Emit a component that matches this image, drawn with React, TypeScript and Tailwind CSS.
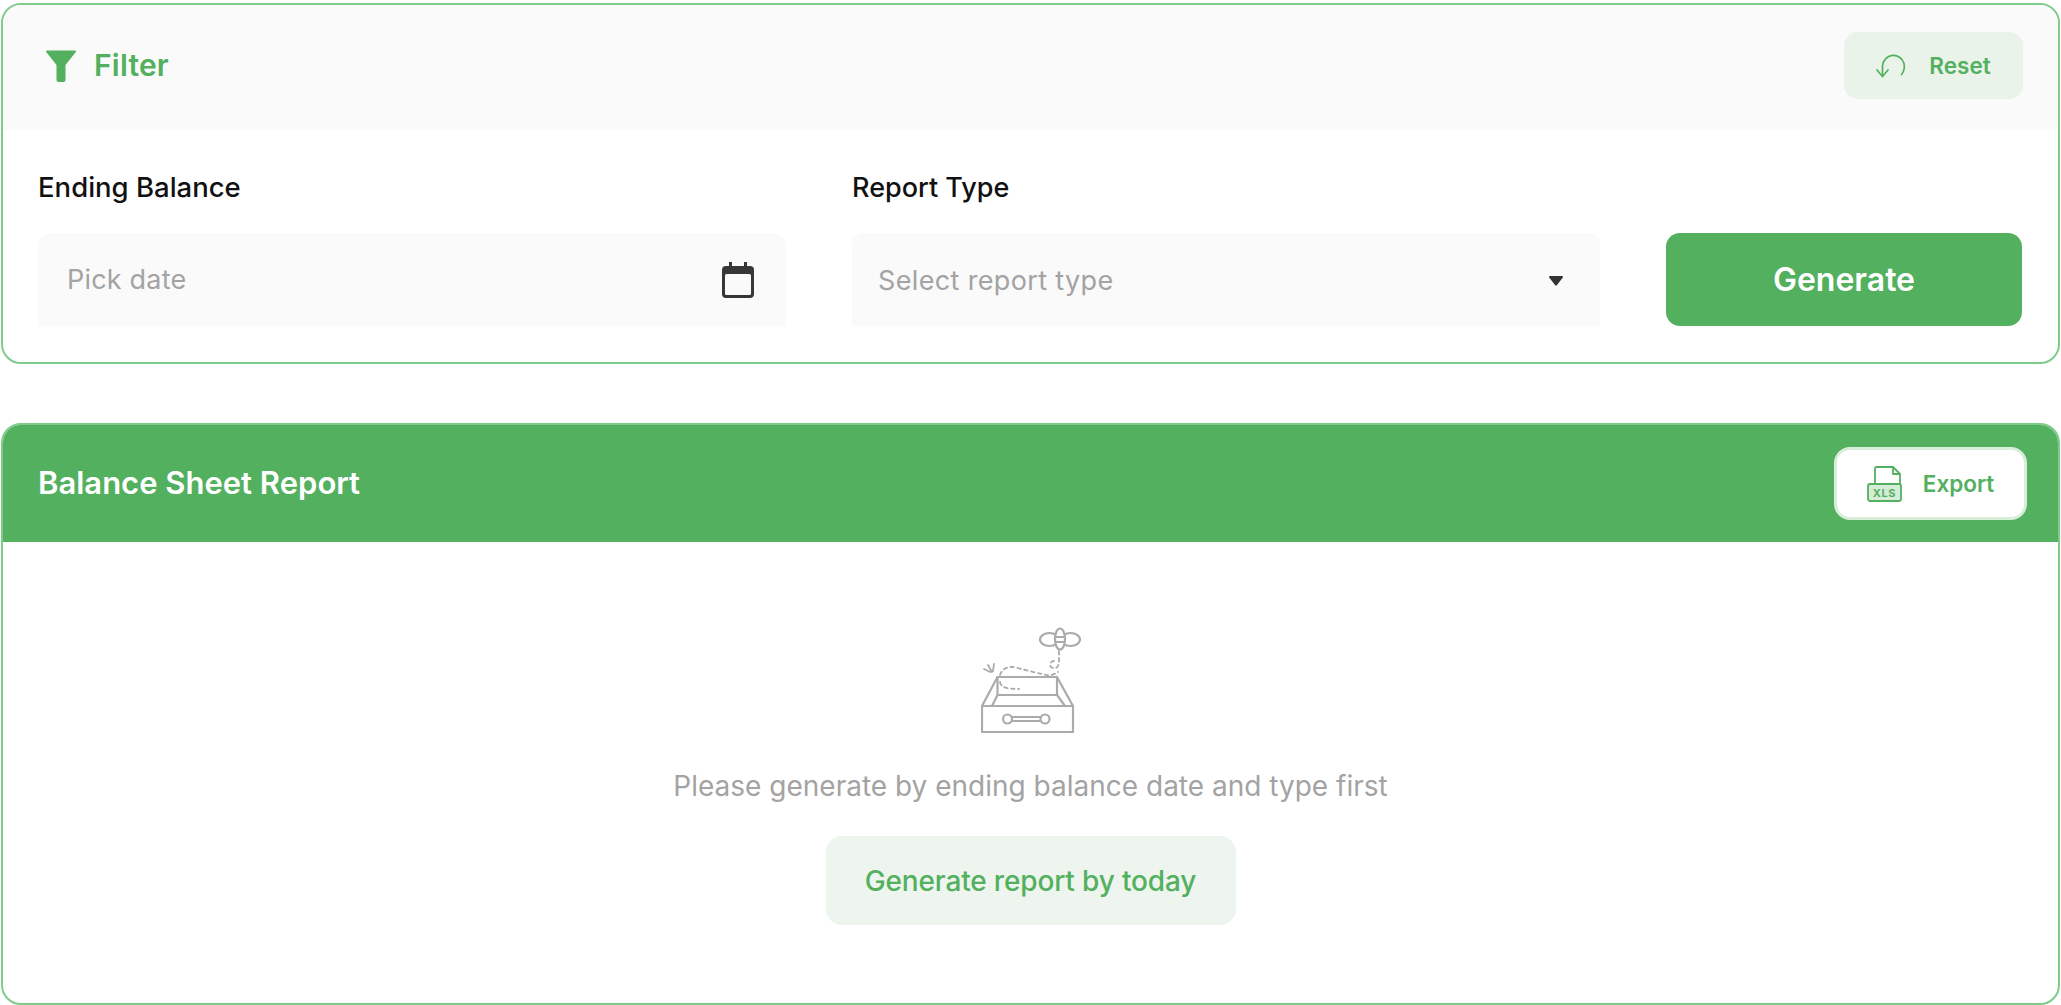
function FilterIcon() {
  return (
    <svg width="30" height="32" viewBox="0 0 30 32" className="shrink-0">
      <path d="M1 0.500h28a1 1 0 0 1 .8 1.600L19.500 15v15a2 2 0 0 1-2 2h-5a2 2 0 0 1-2-2V15L.2 2.100A1 1 0 0 1 1 .5z" fill="#53b05f" />
    </svg>
  )
}

function ResetIcon() {
  return (
    <svg width="32" height="26" viewBox="0 0 32 26" fill="none" stroke="#53b05f" strokeWidth="1.700" strokeLinecap="round" strokeLinejoin="round" className="shrink-0">
      <path d="M6.500 23V13A11 11.500 0 0 1 28 10.500c1 4-.2 8-2.500 11" />
      <path d="M1 17l5.500 6.500L12 17" />
    </svg>
  )
}

function CalendarIcon() {
  return (
    <svg width="32" height="36" viewBox="0 0 32 36" className="shrink-0">
      <path d="M7 0h3v4h12V0h3v4h3a4 4 0 0 1 4 4v24a4 4 0 0 1-4 4H4a4 4 0 0 1-4-4V8a4 4 0 0 1 4-4h3z" fill="#373737" />
      <rect x="3" y="12" width="26" height="21" rx="1.500" fill="#fafafa" />
    </svg>
  )
}

function XlsIcon() {
  return (
    <svg width="36" height="36" viewBox="0 0 36 36" fill="none" className="shrink-0">
      <path d="M8 18V2.500A1.500 1.500 0 0 1 9.500 1H26l7 7v10" stroke="#53b05f" strokeWidth="1.800" strokeLinejoin="round" />
      <path d="M26 1v7h7" stroke="#53b05f" strokeWidth="1.800" strokeLinejoin="round" />
      <rect x="1" y="18" width="33" height="17" rx="2" fill="#d5ecd8" stroke="#53b05f" strokeWidth="1.800" />
      <text x="17.500" y="31" textAnchor="middle" fontSize="11" fontWeight="700" fill="#53b05f" fontFamily="Inter, sans-serif" letterSpacing="0.6">XLS</text>
    </svg>
  )
}

function EmptyDrawer() {
  return (
    <svg width="100" height="106" viewBox="0 0 100 106" fill="none" stroke="#ababab" strokeWidth="2.200" strokeLinejoin="round" strokeLinecap="round" className="ml-[1px]">
      <rect x="1" y="79" width="91" height="26" />
      <path d="M1 79L16.500 50H76L92 79" />
      <path d="M16.500 50V68H76V50" />
      <path d="M16.500 68L11 79M76 68L84 79" />
      <circle cx="26.500" cy="92" r="4.500" />
      <circle cx="64" cy="92" r="4.500" />
      <path d="M31 90h28.500M31 94h28.500" />
      {/* flight trail */}
      <path d="M19 48c2-6 8-10 18-7s24 6 28 7c4 1 9-1 12-3" strokeDasharray="3.500 3.500" strokeWidth="1.800" />
      <path d="M19 55c1 6 8 7 19 7" strokeDasharray="3.500 3.500" strokeWidth="1.800" />
      <path d="M78 24v10c0 6-3 8-6 7-5-1-3-7 1-7" strokeDasharray="3.500 3.500" strokeWidth="1.800" />
      <path d="M3 42l6 3M7 38l4 7M13 37l-1 7" strokeWidth="1.800" />
      {/* bee */}
      <ellipse cx="68.500" cy="12.500" rx="9.500" ry="6.500" />
      <ellipse cx="89.500" cy="12.500" rx="9.500" ry="6.500" />
      <ellipse cx="79" cy="12" rx="5" ry="10.500" fill="#fff" />
      <path d="M74.500 10h9M74.500 15h9" />
    </svg>
  )
}

export default function App() {
  return (
    <div className="w-full h-[1005px] bg-white pt-[3px] px-px flex flex-col font-['Inter',sans-serif] overflow-hidden">
      {/* filter card */}
      <section className="h-[361px] shrink-0 rounded-[20px] border-2 border-[#7fcc8a] overflow-hidden">
        <div className="h-[125px] bg-[#fafafa] flex items-center justify-between pl-[43px] pr-[35px] pb-[4px]">
          <div className="flex items-center gap-[18px]">
            <FilterIcon />
            <span className="text-[30px] font-semibold text-[#53b05f] tracking-[0.2px]">Filter</span>
          </div>
          <button className="h-[67px] w-[179px] rounded-[14px] bg-[#e9f3ea] flex items-center justify-center gap-[21px]">
            <ResetIcon />
            <span className="text-[22.500px] font-semibold text-[#53b05f]">Reset</span>
          </button>
        </div>
        <div className="grid grid-cols-[748px_748px_356px] gap-x-[66px] pl-[35px] pt-[39px]">
          <div className="flex flex-col gap-[26px]">
            <label className="h-[38px] flex items-center text-[27.500px] font-medium text-[#111]">Ending Balance</label>
            <div className="h-[93px] rounded-t-[12px] bg-[#fafafa] flex items-center justify-between pl-[29px] pr-[32px] pt-[1px]">
              <span className="text-[27px] text-[#a3a3a3] tracking-[0.2px]">Pick date</span>
              <CalendarIcon />
            </div>
          </div>
          <div className="flex flex-col gap-[26px]">
            <label className="h-[38px] flex items-center text-[27px] font-medium text-[#111]">Report Type</label>
            <div className="h-[93px] rounded-t-[12px] bg-[#fafafa] flex items-center justify-between pl-[26px] pr-[37px] pt-[3px]">
              <span className="text-[27px] text-[#a3a3a3] tracking-[0.350px]">Select report type</span>
              <svg width="14" height="10" viewBox="0 0 14 10"><path d="M1 0h12a1 1 0 0 1 .8 1.600L8 9a1.200 1.200 0 0 1-2 0L.2 1.600A1 1 0 0 1 1 0z" fill="#333" /></svg>
            </div>
          </div>
          <button className="self-end h-[93px] rounded-[14px] bg-[#53b05f] text-[32px] font-semibold text-white">Generate</button>
        </div>
      </section>

      {/* report card */}
      <section className="mt-[59px] flex-1 min-h-0 rounded-[20px] border-2 border-[#7fcc8a] overflow-hidden flex flex-col">
        <div className="h-[117px] shrink-0 bg-[#53b05f] flex items-center justify-between pl-[35px] pr-[31px]">
          <h2 className="text-[31px] font-semibold text-white">Balance Sheet Report</h2>
          <button className="h-[73px] w-[193px] rounded-[16px] bg-white border-[3px] border-[#d8eedb] flex items-center justify-center gap-[20px]">
            <XlsIcon />
            <span className="text-[22.500px] font-semibold text-[#53b05f]">Export</span>
          </button>
        </div>
        <div className="flex flex-col items-center pt-[85px]">
          <EmptyDrawer />
          <p className="mt-[35px] text-[28px] leading-[36px] text-[#a3a3a3]">Please generate by ending balance date and type first</p>
          <button className="mt-[32px] h-[89px] w-[410px] rounded-[16px] bg-[#edf5ee] text-[28px] font-medium text-[#53b05f] tracking-[-0.150px]">Generate report by today</button>
        </div>
      </section>
    </div>
  )
}
